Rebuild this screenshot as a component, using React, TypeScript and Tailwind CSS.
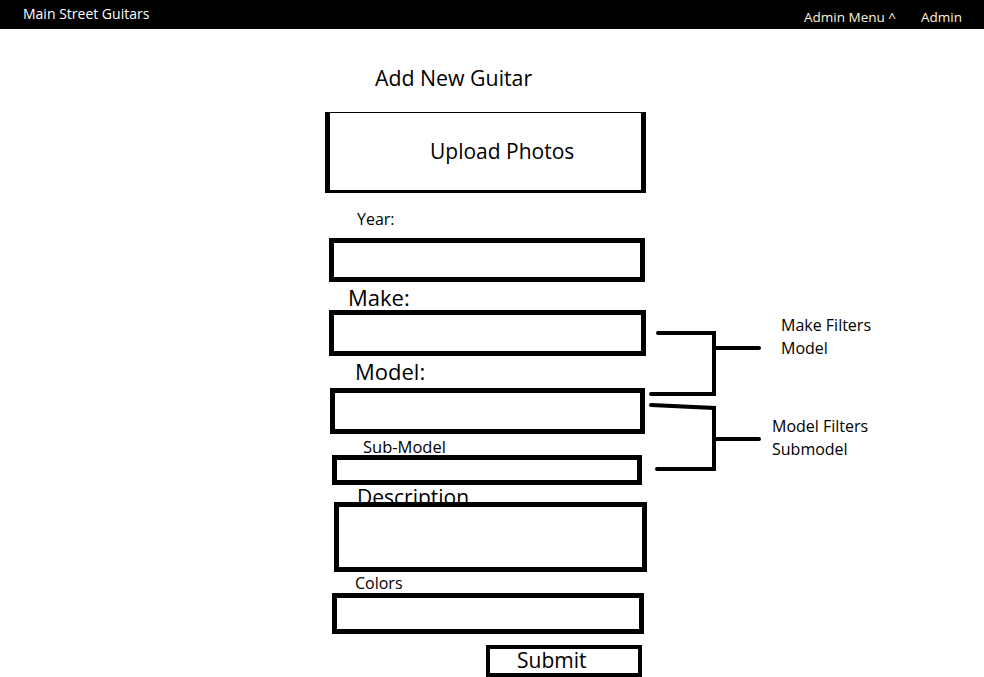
const font = { fontFamily: '"Open Sans", "Noto Sans", sans-serif' };

function Box({ className }: { className: string }) {
    return <div className={`relative bg-white border-black border-[5px] ${className}`}></div>;
}

export default function App() {
    return (
        <div className="relative w-[984px] h-[677px] overflow-hidden bg-white text-black" style={font}>
            {/* Top bar */}
            <header className="flex h-[29px] bg-black">
                <div className="pl-[23px] pt-[3px] text-[14px] text-white">Main Street Guitars</div>
                <div className="ml-auto flex gap-[25px] pr-[22px] pt-[7px] text-[13.5px] text-[#fff3dc]">
                    <span>Admin Menu ^</span>
                    <span>Admin</span>
                </div>
            </header>

            {/* Form column */}
            <main className="ml-[325px] flex w-[330px] flex-col items-start">
                <h1 className="ml-[50px] mt-[35px] h-[28px] text-[21.3px] leading-[28px]">Add New Guitar</h1>

                <div className="mt-[20px] flex h-[81px] w-[321px] items-center border-black border-t border-l-[5px] border-r-[5px] border-b-[3px] pl-[100px] text-[21px]">
                    Upload Photos
                </div>

                <label className="ml-[32px] mt-[16px] h-[20px] text-[16px] leading-[20px]">Year:</label>
                <Box className="ml-[4px] mt-[9px] h-[44px] w-[316px]" />

                <label className="ml-[23px] mt-[3px] h-[25px] text-[22px] leading-[25px]">Make:</label>
                <Box className="ml-[4px] mt-0 h-[46px] w-[317px]" />

                <label className="ml-[30px] mt-[2px] h-[26px] text-[22px] leading-[26px]">Model:</label>
                <Box className="ml-[5px] mt-[4px] h-[46px] w-[315px]" />

                <label className="ml-[38px] mt-[3px] h-[20px] text-[16.5px] leading-[20px]">Sub-Model</label>
                <Box className="ml-[7px] mt-[-2px] h-[30px] w-[310px]" />

                <label className="ml-[32px] mt-[-1px] h-[26px] text-[21px] leading-[26px]">Description</label>
                <Box className="ml-[9px] mt-[-8px] h-[70px] w-[313px]" />

                <label className="ml-[30px] mt-[1px] h-[20px] text-[16px] leading-[20px]">Colors</label>
                <Box className="ml-[7px] mt-0 h-[41px] w-[312px]" />

                <button className="ml-[161px] mt-[11px] flex h-[32px] w-[156px] items-center border-[4px] border-black pl-[27px] text-[21px]">
                    Submit
                </button>
            </main>

            {/* Annotation brackets */}
            <svg className="absolute left-0 top-0" width="984" height="677" fill="none" stroke="black" strokeWidth="4" strokeLinecap="round">
                <path d="M658 333 H714 V394 H651" />
                <path d="M714 348 H759" />
                <path d="M651 405 L714 408 V469 H657" />
                <path d="M714 439 H759" />
            </svg>

            <div className="absolute left-[781px] top-[314px] text-[16px] leading-[23px]">
                Make Filters
                <br />
                Model
            </div>
            <div className="absolute left-[772px] top-[415px] text-[16px] leading-[23px]">
                Model Filters
                <br />
                Submodel
            </div>
        </div>
    );
}
